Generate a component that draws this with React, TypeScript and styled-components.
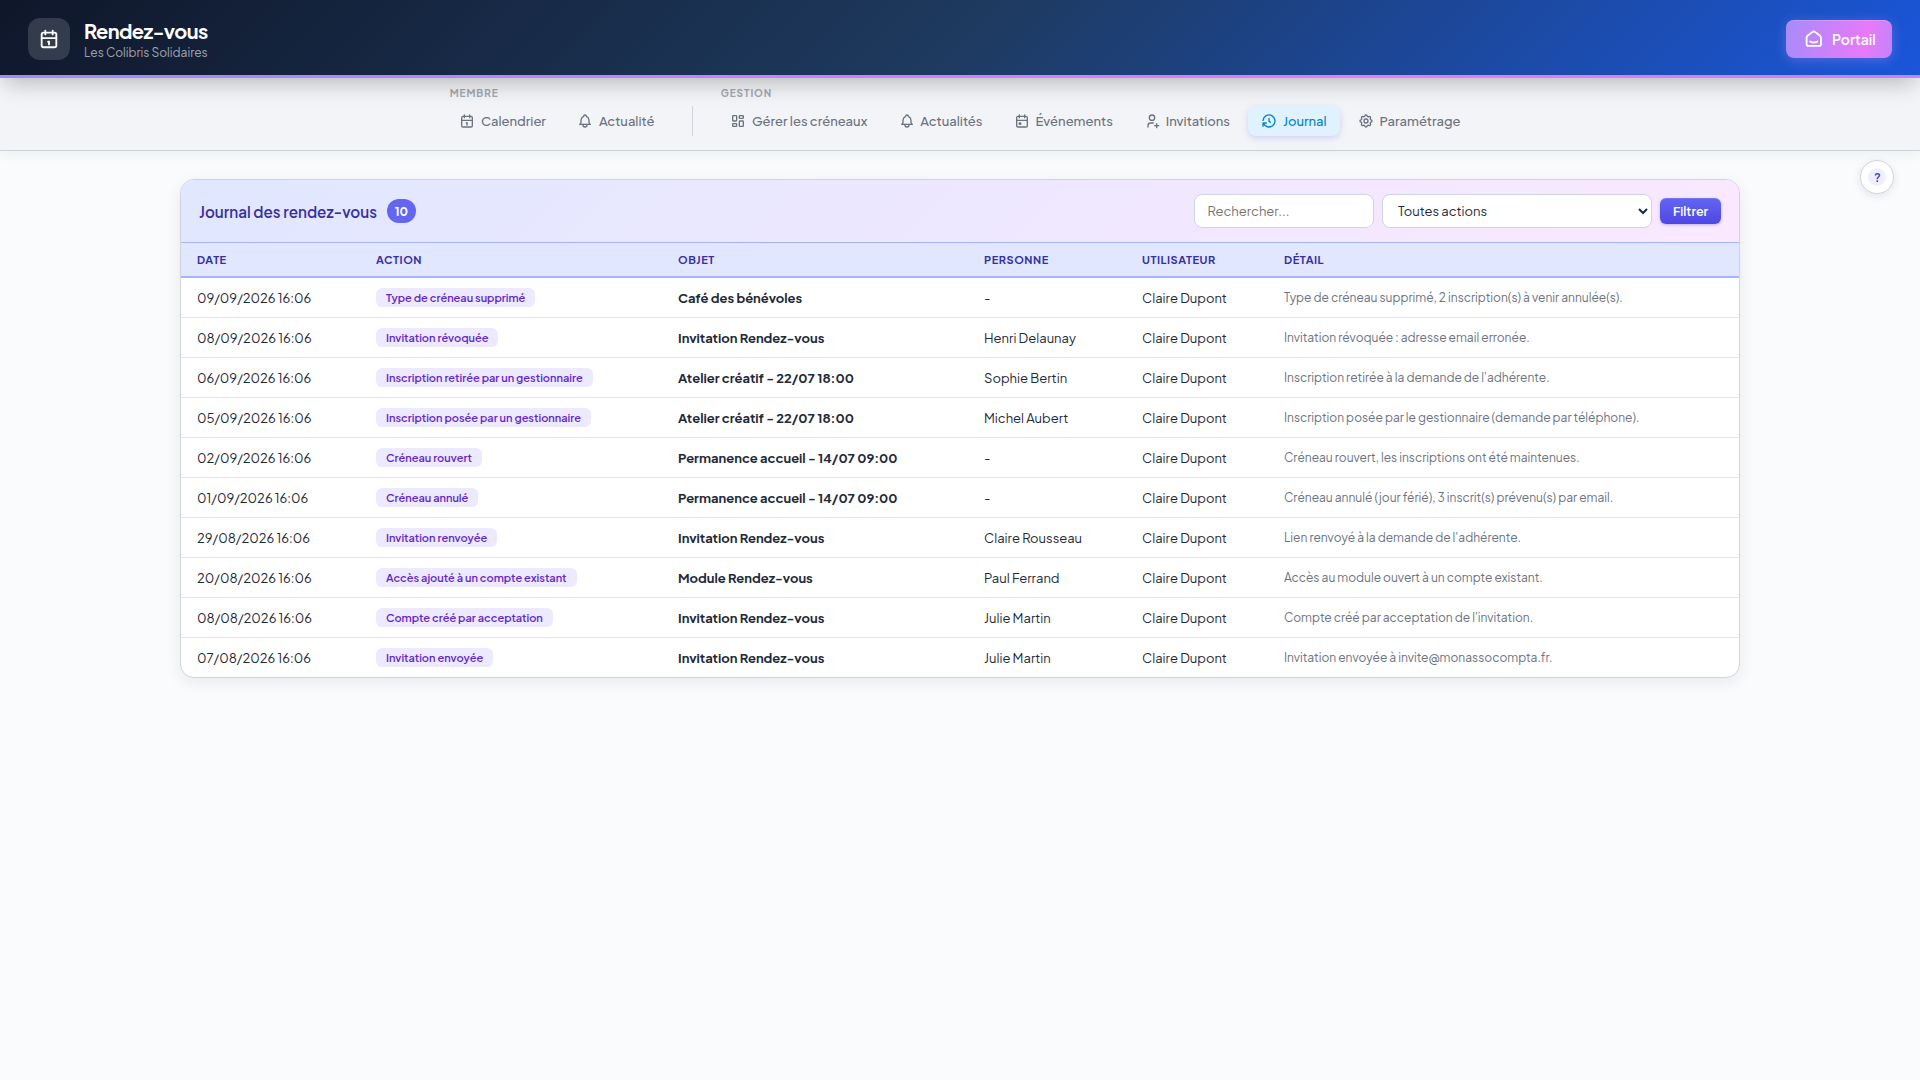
import React from 'react';
import styled, { createGlobalStyle, css } from 'styled-components';
import type { IconType } from 'react-icons';
import {
  TbBell,
  TbCalendar,
  TbCalendarEvent,
  TbHistory,
  TbLayoutDashboard,
  TbSettings,
  TbSmartHome,
  TbUserPlus,
} from 'react-icons/tb';

const GlobalStyle = createGlobalStyle`
  *, *::before, *::after { box-sizing: border-box; }
  body {
    margin: 0;
    min-height: 100vh;
    background: #fafbfd;
    color: #1f2937;
    font-family: "Plus Jakarta Sans", Inter, "Liberation Sans", sans-serif;
    font-size: 13px;
  }
  input, select, button { font-family: inherit; }
`;

const TopBar = styled.header`
  position: relative;
  z-index: 2;
  display: flex;
  align-items: center;
  justify-content: space-between;
  height: 78px;
  padding: 0 28px 0;
  border-bottom: 3px solid transparent;
  background:
    linear-gradient(135deg, #0f172a 0%, #1e3a5f 50%, #1a56db 100%) padding-box,
    linear-gradient(90deg, #9b8cf6 0%, #c084fc 40%, #e879f9 75%, #c084fc 100%) border-box;
  box-shadow: 0 10px 22px -5px rgba(0, 0, 0, 0.25);
`;

const Brand = styled.div`
  display: flex;
  align-items: center;
  gap: 14px;
`;

const BrandIcon = styled.div`
  display: grid;
  place-items: center;
  width: 42px;
  height: 42px;
  margin-top: 3px;
  border-radius: 12px;
  background: rgba(255, 255, 255, 0.15);
  color: #fff;
`;

const BrandTitle = styled.h1`
  margin: 6px 0 0;
  font-size: 20px;
  line-height: 24px;
  font-weight: 700;
  letter-spacing: -0.6px;
  color: #fff;
`;

const BrandSubtitle = styled.p`
  margin: 0;
  padding-top: 1px;
  font-size: 12px;
  line-height: 18px;
  color: rgba(255, 255, 255, 0.6);
`;

const PortalButton = styled.button`
  display: flex;
  align-items: center;
  gap: 7.5px;
  width: 106px;
  height: 38px;
  margin-top: 3px;
  padding: 0 0 0 17px;
  border: 0;
  border-radius: 8px;
  background: linear-gradient(100deg, #a78bfa 0%, #e879f9 75%, #c084fc 100%);
  box-shadow: 0 2px 12px rgba(167, 139, 250, 0.4), inset 0 1px 0 rgba(255, 255, 255, 0.2);
  color: #fff;
  font-size: 14px;
  font-weight: 600;
`;

const NavBar = styled.nav`
  display: flex;
  justify-content: center;
  align-items: flex-start;
  height: 73px;
  padding-top: 9px;
  border-bottom: 1px solid #cbd3d8;
  background: #f3f4f7;
  box-shadow: 0 4px 12px rgba(15, 23, 42, 0.05);
`;

const NavGroupBox = styled.div`
  display: flex;
  flex-direction: column;
  gap: 7px;
`;

const NavLabel = styled.span`
  padding-left: 4px;
  font-size: 10px;
  line-height: 12px;
  font-weight: 700;
  letter-spacing: 0.95px;
  color: #a0a6b0;
`;

const NavItems = styled.div`
  display: flex;
  gap: 4px;
`;

const NavDivider = styled.span`
  width: 1px;
  height: 30px;
  margin: 19px 23.5px 0 24px;
  background: #d1d5db;
`;

const NavItem = styled.a<{ $active?: boolean }>`
  display: flex;
  align-items: center;
  gap: 5.6px;
  height: 30px;
  padding: 0 13.7px;
  border-radius: 8px;
  font-size: 13px;
  font-weight: 500;
  color: #6b7280;
  white-space: nowrap;
  ${(p) =>
    p.$active &&
    css`
      background: #e0f2fe;
      color: #0284c7;
      box-shadow: 0 2px 6px rgba(99, 102, 241, 0.25);
    `}
`;

const HelpButton = styled.button`
  position: fixed;
  top: 160px;
  right: 26px;
  display: grid;
  place-items: center;
  width: 34px;
  height: 34px;
  padding: 0;
  border: 1px solid #cfd4dc;
  border-radius: 50%;
  background: #fff;
  box-shadow: 0 2px 8px rgba(15, 23, 42, 0.1);
`;

const HelpMark = styled.span`
  display: grid;
  place-items: center;
  width: 18px;
  height: 18px;
  padding-left: 1px;
  border-radius: 50%;
  background: #eef0ff;
  color: #5145cd;
  font-size: 12px;
  font-weight: 700;
`;

const Page = styled.main`
  width: 1560px;
  margin: 28px auto 0;
`;

const Card = styled.section`
  overflow: hidden;
  border: 1px solid #cfd4de;
  border-radius: 14px;
  background: #fff;
  box-shadow: 0 4px 16px rgba(15, 23, 42, 0.08);
`;

const CardHeader = styled.div`
  display: flex;
  align-items: center;
  justify-content: space-between;
  height: 63px;
  padding: 0 18px;
  border-bottom: 1px solid #a5b4fc;
  background: linear-gradient(135deg, #e0e7ff 0%, #fae8ff 100%);
`;

const CardTitle = styled.h2`
  display: flex;
  align-items: center;
  gap: 10px;
  margin: 0;
  font-size: 15.2px;
  font-weight: 600;
  color: #3730a3;
`;

const TitleText = styled.span`
  padding-top: 1px;
`;

const CountBadge = styled.span`
  display: grid;
  place-items: center;
  width: 29px;
  height: 24px;
  border-radius: 12px;
  background: #6366f1;
  color: #fff;
  font-size: 12px;
  font-weight: 700;
`;

const Filters = styled.form`
  display: flex;
  align-items: center;
  gap: 8px;
`;

const fieldStyle = css`
  height: 34px;
  border: 1px solid #cfd4e2;
  border-radius: 8px;
  background-color: #fff;
  font-size: 13px;
  color: #1f2937;
`;

const SearchInput = styled.input`
  ${fieldStyle}
  width: 180px;
  padding: 0 12.5px;
  &::placeholder { color: #757575; opacity: 1; }
`;

const ActionSelect = styled.select`
  ${fieldStyle}
  width: 270px;
  padding: 0 0 0 11px;
`;

const FilterButton = styled.button`
  width: 61px;
  height: 26px;
  padding: 0;
  border: 0;
  border-radius: 6px;
  background: linear-gradient(180deg, #6366f1, #4f46e5);
  box-shadow: 0 1px 3px rgba(79, 70, 229, 0.35), inset 0 1px 0 rgba(255, 255, 255, 0.12);
  color: #fff;
  font-size: 12.5px;
  font-weight: 600;
`;

const Table = styled.table`
  width: 100%;
  table-layout: fixed;
  border-collapse: separate;
  border-spacing: 0;
`;

const Th = styled.th<{ $w?: number }>`
  width: ${(p) => (p.$w ? `${p.$w}px` : 'auto')};
  height: 35px;
  padding: 0 16px;
  border-bottom: 2px solid #a5b4fc;
  background: #e0e7ff;
  color: #3730a3;
  font-size: 11px;
  font-weight: 700;
  letter-spacing: 0.52px;
  text-align: left;
`;

const Td = styled.td<{ $kind?: 'action' | 'subject' | 'detail' }>`
  height: 40px;
  padding: 1px 16px 0;
  border-bottom: 1px solid #e3e5e9;
  font-size: 13px;
  line-height: 20px;
  white-space: nowrap;
  ${(p) => p.$kind === 'action' && css`padding-top: 0;`}
  ${(p) => p.$kind === 'subject' && css`font-weight: 700;`}
  ${(p) => p.$kind === 'detail' && css`padding-top: 0; font-size: 12px; color: #6b7280;`}
  tr:last-child & { height: 39px; border-bottom: 0; }
`;

const ActionTag = styled.span`
  display: block;
  width: fit-content;
  height: 19px;
  padding: 0 10px;
  border-radius: 6px;
  background: #ede9fe;
  color: #6428c8;
  font-size: 11px;
  line-height: 19px;
  font-weight: 600;
`;

interface LogEntry {
  date: string;
  action: string;
  subject: string;
  person: string;
  user: string;
  detail: string;
}

const user = 'Claire Dupont';

const entries: LogEntry[] = [
  { date: '09/09/2026 16:06', action: 'Type de créneau supprimé', subject: 'Café des bénévoles', person: '-', user, detail: 'Type de créneau supprimé, 2 inscription(s) à venir annulée(s).' },
  { date: '08/09/2026 16:06', action: 'Invitation révoquée', subject: 'Invitation Rendez-vous', person: 'Henri Delaunay', user, detail: 'Invitation révoquée : adresse email erronée.' },
  { date: '06/09/2026 16:06', action: 'Inscription retirée par un gestionnaire', subject: 'Atelier créatif - 22/07 18:00', person: 'Sophie Bertin', user, detail: "Inscription retirée à la demande de l'adhérente." },
  { date: '05/09/2026 16:06', action: 'Inscription posée par un gestionnaire', subject: 'Atelier créatif - 22/07 18:00', person: 'Michel Aubert', user, detail: 'Inscription posée par le gestionnaire (demande par téléphone).' },
  { date: '02/09/2026 16:06', action: 'Créneau rouvert', subject: 'Permanence accueil - 14/07 09:00', person: '-', user, detail: 'Créneau rouvert, les inscriptions ont été maintenues.' },
  { date: '01/09/2026 16:06', action: 'Créneau annulé', subject: 'Permanence accueil - 14/07 09:00', person: '-', user, detail: 'Créneau annulé (jour férié), 3 inscrit(s) prévenu(s) par email.' },
  { date: '29/08/2026 16:06', action: 'Invitation renvoyée', subject: 'Invitation Rendez-vous', person: 'Claire Rousseau', user, detail: "Lien renvoyé à la demande de l'adhérente." },
  { date: '20/08/2026 16:06', action: 'Accès ajouté à un compte existant', subject: 'Module Rendez-vous', person: 'Paul Ferrand', user, detail: 'Accès au module ouvert à un compte existant.' },
  { date: '08/08/2026 16:06', action: 'Compte créé par acceptation', subject: 'Invitation Rendez-vous', person: 'Julie Martin', user, detail: "Compte créé par acceptation de l'invitation." },
  { date: '07/08/2026 16:06', action: 'Invitation envoyée', subject: 'Invitation Rendez-vous', person: 'Julie Martin', user, detail: 'Invitation envoyée à invite@monassocompta.fr.' },
];

interface NavEntry {
  icon: IconType;
  label: string;
  active?: boolean;
}

const memberNav: NavEntry[] = [
  { icon: TbCalendar, label: 'Calendrier' },
  { icon: TbBell, label: 'Actualité' },
];

const managerNav: NavEntry[] = [
  { icon: TbLayoutDashboard, label: 'Gérer les créneaux' },
  { icon: TbBell, label: 'Actualités' },
  { icon: TbCalendarEvent, label: 'Événements' },
  { icon: TbUserPlus, label: 'Invitations' },
  { icon: TbHistory, label: 'Journal', active: true },
  { icon: TbSettings, label: 'Paramétrage' },
];

const columns: { label: string; width?: number }[] = [
  { label: 'DATE', width: 179 },
  { label: 'ACTION', width: 302 },
  { label: 'OBJET', width: 306 },
  { label: 'PERSONNE', width: 158 },
  { label: 'UTILISATEUR', width: 142 },
  { label: 'DÉTAIL' },
];

function NavGroup({ label, items }: { label: string; items: NavEntry[] }) {
  return (
    <NavGroupBox>
      <NavLabel>{label}</NavLabel>
      <NavItems>
        {items.map(({ icon: Icon, label: text, active }) => (
          <NavItem key={text} $active={active}>
            <Icon size={16} />
            {text}
          </NavItem>
        ))}
      </NavItems>
    </NavGroupBox>
  );
}

export default function App() {
  return (
    <>
      <GlobalStyle />
      <TopBar>
        <Brand>
          <BrandIcon>
            <TbCalendar size={22} />
          </BrandIcon>
          <div>
            <BrandTitle>Rendez-vous</BrandTitle>
            <BrandSubtitle>Les Colibris Solidaires</BrandSubtitle>
          </div>
        </Brand>
        <PortalButton>
          <TbSmartHome size={21.5} />
          Portail
        </PortalButton>
      </TopBar>

      <NavBar>
        <NavGroup label="MEMBRE" items={memberNav} />
        <NavDivider />
        <NavGroup label="GESTION" items={managerNav} />
      </NavBar>

      <HelpButton aria-label="Aide">
        <HelpMark>?</HelpMark>
      </HelpButton>

      <Page>
        <Card>
          <CardHeader>
            <CardTitle>
              <TitleText>Journal des rendez-vous</TitleText>
              <CountBadge>10</CountBadge>
            </CardTitle>
            <Filters onSubmit={(e) => e.preventDefault()}>
              <SearchInput placeholder="Rechercher..." />
              <ActionSelect>
                <option>Toutes actions</option>
              </ActionSelect>
              <FilterButton>Filtrer</FilterButton>
            </Filters>
          </CardHeader>
          <Table>
            <thead>
              <tr>
                {columns.map((c) => (
                  <Th key={c.label} $w={c.width}>
                    {c.label}
                  </Th>
                ))}
              </tr>
            </thead>
            <tbody>
              {entries.map((e) => (
                <tr key={e.date}>
                  <Td>{e.date}</Td>
                  <Td $kind="action">
                    <ActionTag>{e.action}</ActionTag>
                  </Td>
                  <Td $kind="subject">{e.subject}</Td>
                  <Td>{e.person}</Td>
                  <Td>{e.user}</Td>
                  <Td $kind="detail">{e.detail}</Td>
                </tr>
              ))}
            </tbody>
          </Table>
        </Card>
      </Page>
    </>
  );
}
